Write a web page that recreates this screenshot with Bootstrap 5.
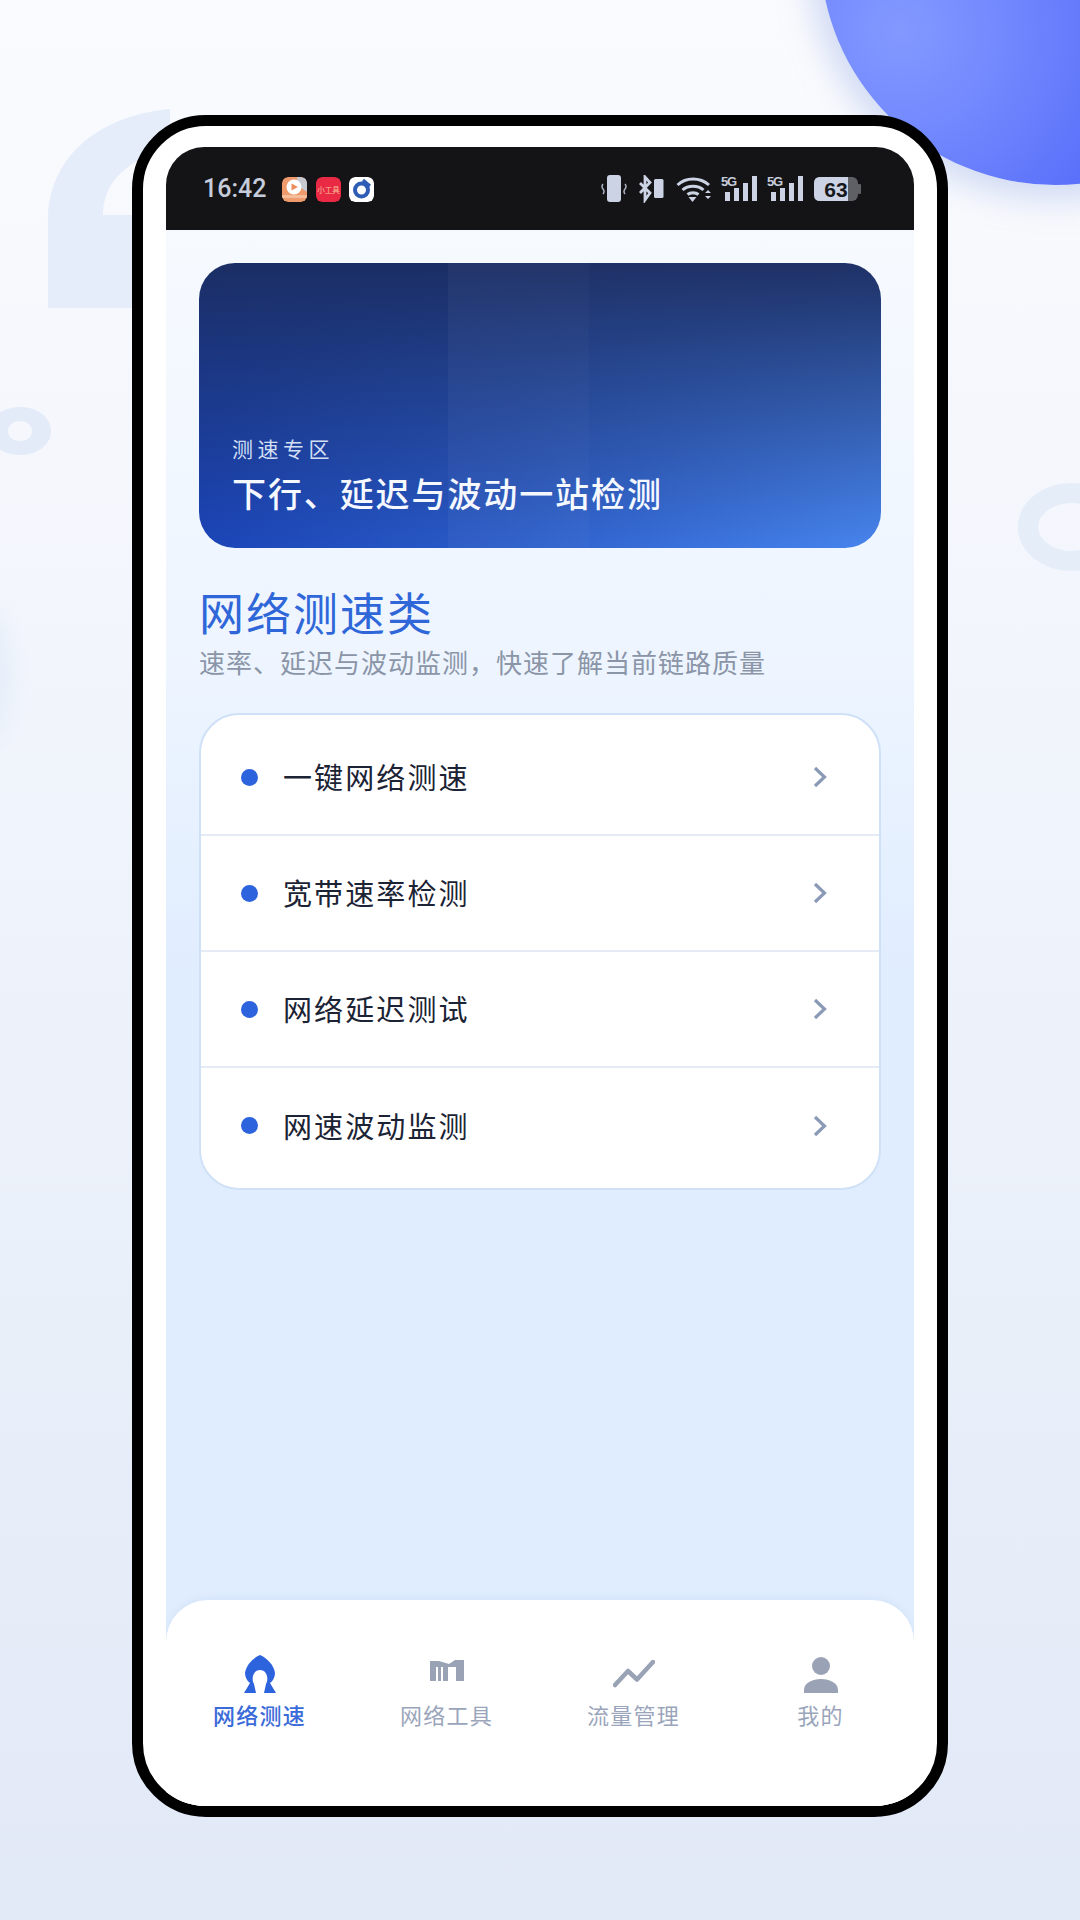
<!DOCTYPE html>
<html lang="zh-CN">
<head>
    <meta charset="UTF-8">
    <meta name="viewport" content="width=device-width, initial-scale=1.0">
    <title>网络测速</title>
    <link href="https://cdn.jsdelivr.net/npm/bootstrap@5.3.0/dist/css/bootstrap.min.css" rel="stylesheet">
    <style>
        html, body { height: 1920px; overflow: hidden; }
        body {
            font-family: "Noto Sans CJK SC", "Liberation Sans", sans-serif;
            background: linear-gradient(180deg, #fafbfe 0%, #f3f6fc 30%, #e9eff9 70%, #e2e9f7 100%);
            position: relative;
        }
        /* background decoration */
        .deco { position: absolute; }
        .deco-clip { position: absolute; left: 0; top: 0; width: 1080px; height: 1920px; overflow: hidden; }
        .deco-blob {
            left: 820px; top: -285px; width: 470px; height: 470px; border-radius: 50%;
            background: radial-gradient(circle at 17% 67%, #8399ff 0%, #7389fe 20%, #5b71fa 46%, #566cf9 100%);
            box-shadow: 0 0 30px 14px rgba(172, 190, 235, .5);
        }
        .deco-glow {
            left: -40px; top: 610px; width: 50px; height: 130px; border-radius: 50%;
            background: #e4edf9; filter: blur(10px);
        }
        .phone-wrap { padding: 115px 0 0 132px; position: relative; }
        .phone {
            width: 816px; height: 1702px; background: #fff;
            border: 11px solid #000; border-radius: 74px; overflow: hidden;
            padding: 21px 23px 0 23px;
        }
        .screen {
            height: 100%; border-radius: 38px 38px 0 0; overflow: hidden;
            background: linear-gradient(180deg, #f8fbff 0%, #eef5ff 30%, #e0edff 50%, #e0edfe 90%, #e8f0fc 100%);
        }
        .status-bar { height: 83px; background: #141416; padding: 30px 53px 0 37px; flex-shrink: 0; }
        .status-time { font-family: Roboto, sans-serif; font-weight: 500; font-size: 25px; line-height: 24px; color: #c6ccdb; width: 79px; }
        .app-icon { width: 25px; height: 25px; border-radius: 6px; display: block; margin-right: 8px; }
        .status-bar svg { flex-shrink: 0; display: block; }
        .status-right { margin-top: -2px; }
        .status-label { font-family: "Liberation Sans", sans-serif; }
        .content { padding: 33px 33px 0 33px; }
        .hero {
            height: 285px; border-radius: 36px; padding: 0 0 32px 33px;
            background:
                linear-gradient(90deg, transparent 249px, rgba(255,255,255,.035) 249px, rgba(255,255,255,.035) 390px, rgba(255,255,255,.015) 390px),
                linear-gradient(180deg, rgba(27,46,100,1) 0%, rgba(27,46,100,0) 100%),
                linear-gradient(90deg, #1b45b8 0%, #2a5cc9 45%, #4483ee 100%);
            color: #fff;
        }
        .hero-tag { font-size: 21px; letter-spacing: 4.500px; line-height: 28px; color: #d3dff5; margin-bottom: 8px; }
        .hero-title { font-size: 34px; letter-spacing: 1.900px; line-height: 46px; color: #f5f8ff; font-weight: 500; }
        .section-title { font-size: 45px; line-height: 60px; color: #2f67d9; margin: 34px 0 2px 0; letter-spacing: 2px; font-weight: 400; }
        .section-sub { font-size: 26px; letter-spacing: 1px; line-height: 36px; color: #8b95a8; margin: 0 0 33px 0; }
        .speed-list {
            border: 2px solid #cfe0f7; border-radius: 40px; overflow: hidden; background: #fff;
        }
        .speed-row {
            height: 116px; padding: 0 52px 0 40px; border-color: #e4ebf6; border-width: 0 0 2px 0;
            font-size: 29px; letter-spacing: 2.100px; color: #1b2334;
        }
        .speed-row:first-child { height: 121px; padding-top: 5px; }
        .speed-row:last-child { border-bottom: 0; height: 120px; padding-bottom: 5px; }
        .dot { width: 17px; height: 17px; border-radius: 50%; background: #2d63dc; margin-right: 25px; flex-shrink: 0; }
        .tab-bar {
            height: 206px; background: #fff; border-radius: 42px 42px 0 0; flex-shrink: 0;
            padding-top: 51px;
            box-shadow: 0 -2px 6px rgba(190, 208, 240, .35);
        }
        .tab-item { width: 25%; font-size: 22px; letter-spacing: 1.200px; line-height: 30px; color: #9aa5bb; }
        .tab-item.is-active { color: #3a6bd9; font-weight: 500; }
        .tab-icon { height: 42px; margin-bottom: 6px; }
        .tab-icon-low { padding-top: 9px; }
    </style>
</head>
<body>
    <!-- background decoration -->
    <div class="deco-clip">
        <div class="deco deco-blob"></div>
        <div class="deco deco-glow"></div>
        <svg class="deco" style="left:0;top:90px" width="180" height="240" viewBox="0 0 180 240">
            <path d="M48 218 V130 C48 70 95 26 170 19 V60 C130 68 103 90 103 125 H170 V218 Z" fill="#e4edf9"/>
        </svg>
        <svg class="deco" style="left:0;top:400px" width="60" height="60" viewBox="0 0 60 60">
            <path fill-rule="evenodd" d="M20 7 C37 7 51 17 51 31 C51 45 37 55 20 55 C3 55 -11 45 -11 31 C-11 17 3 7 20 7Z M20 21 C13 21 8 25 8 31 C8 37 13 41 20 41 C27 41 32 37 32 31 C32 25 27 21 20 21Z" fill="#e3ebf8"/>
        </svg>
        <svg class="deco" style="left:1010px;top:478px" width="70" height="96" viewBox="0 0 70 96">
            <ellipse cx="62" cy="49" rx="44" ry="34" fill="none" stroke="#e5edf9" stroke-width="20"/>
        </svg>
    </div>

    <div class="phone-wrap">
        <div class="phone">
            <div class="screen d-flex flex-column">
                <!-- status bar -->
                <div class="status-bar d-flex align-items-start">
                    <div class="status-time">16:42</div>
                    <svg class="app-icon" style="margin-right:9px" viewBox="0 0 25 25">
                        <rect width="25" height="25" rx="6" fill="#ee9a6c"/>
                        <path d="M15 0 H19 Q25 0 25 6 V15 L15 8Z" fill="#c6c9d0"/>
                        <circle cx="12" cy="10" r="7.500" fill="#fff"/>
                        <path d="M9.500 6.500 L16 10 L9.500 13.500Z" fill="#ee8d5c"/>
                        <rect y="18" width="25" height="3" fill="#f4bc98"/>
                    </svg>
                    <svg class="app-icon" viewBox="0 0 25 25">
                        <rect width="25" height="25" rx="6" fill="#ea2a45"/>
                        <text x="12.500" y="15.500" font-size="7.500" text-anchor="middle" fill="#f7c29a" font-family="Noto Sans CJK SC, sans-serif">小工具</text>
                    </svg>
                    <svg class="app-icon" viewBox="0 0 25 25">
                        <rect width="25" height="25" rx="6" fill="#fff"/>
                        <circle cx="12.500" cy="13" r="6.500" fill="none" stroke="#2f5cb5" stroke-width="4"/>
                        <path d="M14 3 L21 9" stroke="#2f5cb5" stroke-width="3"/>
                        <circle cx="12.500" cy="13" r="2" fill="#fff"/>
                    </svg>
                    <div class="status-right d-flex ms-auto align-items-start">
                        <svg width="26" height="28" viewBox="0 0 26 28" class="me-2">
                            <rect x="6" y="0" width="14" height="27" rx="3" fill="#ccd3e4"/>
                            <path d="M2 6 Q0 8.500 2 11 Q4 13.500 2 16 M24 6 Q26 8.500 24 11 Q22 13.500 24 16" fill="none" stroke="#aab1c2" stroke-width="1.500" transform="translate(0 3)"/>
                        </svg>
                        <svg width="26" height="28" viewBox="0 0 26 28" style="margin:0 11px 0 4px">
                            <path d="M1 8 L11 18 L6 25 V2 L11 7.500 L1 18" fill="none" stroke="#ccd3e4" stroke-width="2.800"/>
                            <rect x="15" y="4" width="9.500" height="19" rx="1.500" fill="#ccd3e4"/>
                        </svg>
                        <svg width="36" height="28" viewBox="0 0 36 28" style="margin-right:9px">
                            <path d="M1.500 10 C10 2 24 2 33 10 M6.500 15 C12 10 22 10 27.500 15 M11.500 19.500 C14.500 17 19.500 17 22.500 19.500" fill="none" stroke="#ccd3e4" stroke-width="3"/>
                            <path d="M12.500 22 H20.500 L16.500 27Z" fill="#ccd3e4"/>
                            <path d="M29 18 L32 15 L35 18Z M29 21 H35 L32 24Z" fill="#ccd3e4"/>
                        </svg>
                        <svg width="37" height="28" viewBox="0 0 37 28" style="margin-right:9px">
                            <text class="status-label" x="0" y="11" font-size="13" font-weight="700" fill="#c6ccdb" textLength="16">5G</text>
                            <rect x="4" y="17" width="5" height="9" fill="#ccd3e4"/>
                            <rect x="13" y="13" width="5" height="13" fill="#ccd3e4"/>
                            <rect x="22" y="8" width="5" height="18" fill="#ccd3e4"/>
                            <rect x="31" y="1" width="5" height="25" fill="#ccd3e4"/>
                        </svg>
                        <svg width="37" height="28" viewBox="0 0 37 28" style="margin-right:10px">
                            <text class="status-label" x="0" y="11" font-size="13" font-weight="700" fill="#c6ccdb" textLength="16">5G</text>
                            <rect x="4" y="17" width="5" height="9" fill="#ccd3e4"/>
                            <rect x="13" y="13" width="5" height="13" fill="#ccd3e4"/>
                            <rect x="22" y="8" width="5" height="18" fill="#ccd3e4"/>
                            <rect x="31" y="1" width="5" height="25" fill="#ccd3e4"/>
                        </svg>
                        <svg width="47" height="28" viewBox="0 0 47 28">
                            <rect x="0" y="2" width="44" height="24" rx="6" fill="#5e6066"/>
                            <rect x="44" y="9" width="3" height="10" rx="1" fill="#5e6066"/>
                            <path d="M6 2 H34 V26 H6 Q0 26 0 20 V8 Q0 2 6 2Z" fill="#ccd3e4"/>
                            <text class="status-label" x="22" y="21.500" font-size="21" font-weight="700" text-anchor="middle" fill="#17181c">63</text>
                        </svg>
                    </div>
                </div>

                <!-- main content -->
                <div class="content flex-grow-1">
                    <div class="hero d-flex flex-column justify-content-end">
                        <div class="hero-tag">测速专区</div>
                        <div class="hero-title">下行、延迟与波动一站检测</div>
                    </div>
                    <h1 class="section-title">网络测速类</h1>
                    <p class="section-sub">速率、延迟与波动监测，快速了解当前链路质量</p>
                    <div class="list-group speed-list">
                        <div class="list-group-item speed-row d-flex align-items-center"><span class="dot"></span>一键网络测速
                            <svg class="ms-auto" width="14" height="22" viewBox="0 0 14 22"><path d="M2 2 L11.500 11 L2 20" fill="none" stroke="#8a9ab6" stroke-width="3.200"/></svg>
                        </div>
                        <div class="list-group-item speed-row d-flex align-items-center"><span class="dot"></span>宽带速率检测
                            <svg class="ms-auto" width="14" height="22" viewBox="0 0 14 22"><path d="M2 2 L11.500 11 L2 20" fill="none" stroke="#8a9ab6" stroke-width="3.200"/></svg>
                        </div>
                        <div class="list-group-item speed-row d-flex align-items-center"><span class="dot"></span>网络延迟测试
                            <svg class="ms-auto" width="14" height="22" viewBox="0 0 14 22"><path d="M2 2 L11.500 11 L2 20" fill="none" stroke="#8a9ab6" stroke-width="3.200"/></svg>
                        </div>
                        <div class="list-group-item speed-row d-flex align-items-center"><span class="dot"></span>网速波动监测
                            <svg class="ms-auto" width="14" height="22" viewBox="0 0 14 22"><path d="M2 2 L11.500 11 L2 20" fill="none" stroke="#8a9ab6" stroke-width="3.200"/></svg>
                        </div>
                    </div>
                </div>

                <!-- bottom tabs -->
                <div class="tab-bar d-flex align-items-start">
                    <div class="tab-item is-active d-flex flex-column align-items-center">
                        <div class="tab-icon d-flex align-items-end">
                            <svg width="32" height="38" viewBox="0 0 32 38"><path d="M16 0 C9 3 2 10 1 18 C1 22 3 26 6 28 L0 38 H12 L10 29 C7 24 9 15 16 15 C23 15 25 24 22 29 L20 38 H32 L26 28 C29 26 31 22 31 18 C30 10 23 3 16 0Z" fill="#2d63dc"/></svg>
                        </div>
                        网络测速
                    </div>
                    <div class="tab-item d-flex flex-column align-items-center">
                        <div class="tab-icon tab-icon-low d-flex align-items-start">
                            <svg width="34" height="22" viewBox="0 0 34 22"><path d="M0 1 H9 L19 4 L25 0 H34 V21 H26 V7 H20 V7 H18 V21 H13 V7 H11 V21 H8 V7 H6 V21 H0Z" fill="#9aa3b5"/></svg>
                        </div>
                        网络工具
                    </div>
                    <div class="tab-item d-flex flex-column align-items-center">
                        <div class="tab-icon tab-icon-low d-flex align-items-start">
                            <svg width="42" height="28" viewBox="0 0 42 28"><path d="M2 25 L15 11 L24 19.500 L40 2" fill="none" stroke="#9aa3b5" stroke-width="4.500" stroke-linecap="round" stroke-linejoin="round"/></svg>
                        </div>
                        流量管理
                    </div>
                    <div class="tab-item d-flex flex-column align-items-center">
                        <div class="tab-icon d-flex align-items-end">
                            <svg width="34" height="36" viewBox="0 0 34 36"><circle cx="17" cy="9" r="9" fill="#9aa3b5"/><path d="M0 36 V33 C0 26 8 22 17 22 C26 22 34 26 34 33 V36Z" fill="#9aa3b5"/></svg>
                        </div>
                        我的
                    </div>
                </div>
            </div>
        </div>
    </div>

    <script src="https://cdn.jsdelivr.net/npm/bootstrap@5.3.0/dist/js/bootstrap.bundle.min.js"></script>
</body>
</html>
